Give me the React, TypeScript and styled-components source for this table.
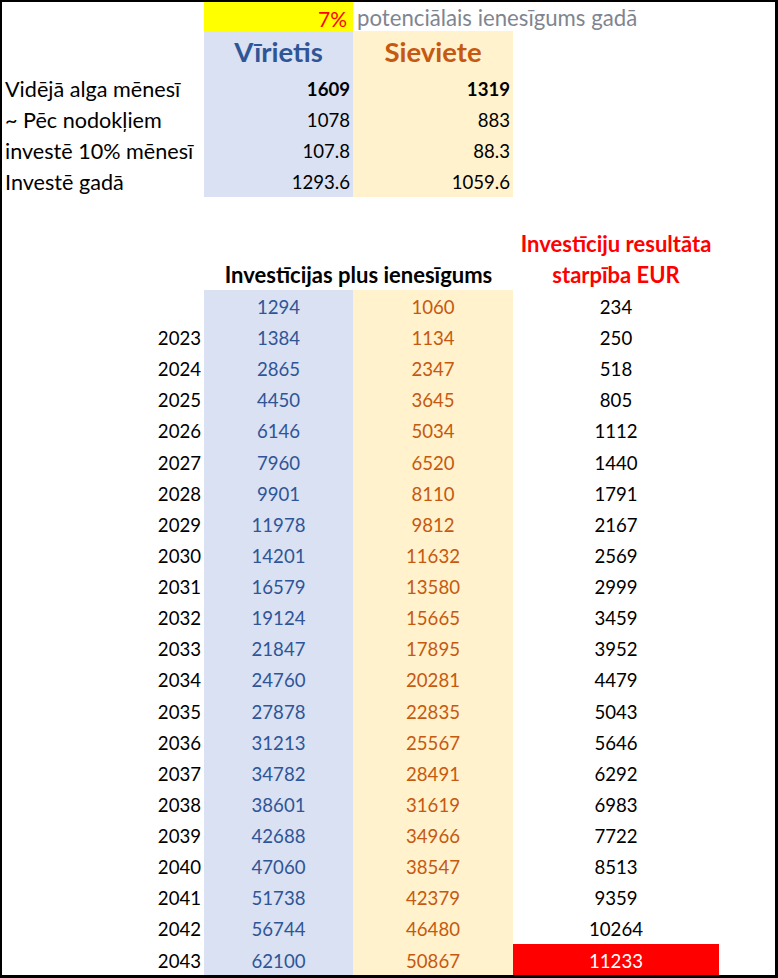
import React from "react";
import styled, { createGlobalStyle } from "styled-components";

const GlobalStyle = createGlobalStyle`
  html, body {
    margin: 0;
    padding: 0;
    background: #ffffff;
  }
  body {
    font-family: Lato, "Liberation Sans", sans-serif;
  }
`;

const BLUE_BG = "#d9e1f2";
const CREAM_BG = "#fff2cc";
const BLUE_TEXT = "#2f5597";
const ORANGE_TEXT = "#c65911";

// Whole sheet snippet with its black frame
const Sheet = styled.div`
  width: 778px;
  height: 978px;
  box-sizing: border-box;
  border-top: 2px solid #000;
  border-left: 2px solid #000;
  border-right: 3px solid #000;
  border-bottom: 3px solid #000;
  display: grid;
  grid-template-columns: 202px 149px 160px 206px 1fr;
  grid-template-rows: 29px 41px repeat(29, 31.138px);
  font-size: 18.6px;
  color: #000;
  overflow: hidden;
`;

type CellProps = {
  $bg?: string;
  $align?: "left" | "center" | "right";
  $color?: string;
  $bold?: boolean;
  $size?: number;
  $span?: number;
  $pad?: number;
};

const Cell = styled.div<CellProps>`
  display: flex;
  align-items: center;
  justify-content: ${(p) =>
    p.$align === "right" ? "flex-end" : p.$align === "center" ? "center" : "flex-start"};
  padding: 3px ${(p) => p.$pad ?? 3}px 0 ${(p) => p.$pad ?? 3}px;
  box-sizing: border-box;
  background: ${(p) => p.$bg ?? "transparent"};
  color: ${(p) => p.$color ?? "#000"};
  font-weight: ${(p) => (p.$bold ? 700 : 400)};
  font-size: ${(p) => (p.$size ? `${p.$size}px` : "inherit")};
  grid-column: ${(p) => (p.$span ? `span ${p.$span}` : "auto")};
  white-space: nowrap;
`;

// Row captions on the left use wider text than the figures
const Label = styled(Cell)`
  font-size: 21.6px;
`;

const Note = styled(Cell)`
  font-size: 22.2px;
  padding-top: 2px;
`;

const Heading = styled(Cell)`
  font-size: 22px;
  font-weight: 700;
  padding-top: 1px;
`;

const PersonHead = styled(Cell)`
  font-size: 27.5px;
  font-weight: 700;
  padding-top: 0;
`;

const Empty = styled.div`
  background: transparent;
`;

const summary = [
  { label: "Vidējā alga mēnesī", m: "1609", f: "1319", bold: true },
  { label: "~ Pēc nodokļiem", m: "1078", f: "883" },
  { label: "investē 10% mēnesī", m: "107.8", f: "88.3" },
  { label: "Investē gadā", m: "1293.6", f: "1059.6" },
];

const men = [
  1294, 1384, 2865, 4450, 6146, 7960, 9901, 11978, 14201, 16579, 19124, 21847,
  24760, 27878, 31213, 34782, 38601, 42688, 47060, 51738, 56744, 62100,
];
const women = [
  1060, 1134, 2347, 3645, 5034, 6520, 8110, 9812, 11632, 13580, 15665, 17895,
  20281, 22835, 25567, 28491, 31619, 34966, 38547, 42379, 46480, 50867,
];
const diff = [
  234, 250, 518, 805, 1112, 1440, 1791, 2167, 2569, 2999, 3459, 3952, 4479,
  5043, 5646, 6292, 6983, 7722, 8513, 9359, 10264, 11233,
];

const App: React.FC = () => {
  return (
    <>
      <GlobalStyle />
      <Sheet>
        {/* Row 1: return rate */}
        <Empty />
        <Cell $bg="#ffff00" $align="right" $color="#ff0000" $pad={6} $size={21}>
          7%
        </Cell>
        <Note $span={2} $color="#7f8590" $pad={4}>
          potenciālais ienesīgums gadā
        </Note>
        <Empty />

        {/* Row 2: headers */}
        <Empty />
        <PersonHead $bg={BLUE_BG} $align="center" $color={BLUE_TEXT}>
          Vīrietis
        </PersonHead>
        <PersonHead $bg={CREAM_BG} $align="center" $color={ORANGE_TEXT}>
          Sieviete
        </PersonHead>
        <Empty />
        <Empty />

        {/* Salary summary */}
        {summary.map((r) => (
          <React.Fragment key={r.label}>
            <Label>{r.label}</Label>
            <Cell $bg={BLUE_BG} $align="right" $bold={r.bold}>
              {r.m}
            </Cell>
            <Cell $bg={CREAM_BG} $align="right" $bold={r.bold}>
              {r.f}
            </Cell>
            <Empty />
            <Empty />
          </React.Fragment>
        ))}

        {/* Blank row */}
        <Empty />
        <Empty />
        <Empty />
        <Empty />
        <Empty />

        {/* Result headers */}
        <Empty />
        <Empty />
        <Empty />
        <Heading $align="center" $color="#ff0000">
          Investīciju resultāta
        </Heading>
        <Empty />

        <Empty />
        <Heading $span={2} $align="center">
          Investīcijas plus ienesīgums
        </Heading>
        <Heading $align="center" $color="#ff0000">
          starpība EUR
        </Heading>
        <Empty />

        {/* Yearly table */}
        {men.map((m, i) => {
          const last = i === men.length - 1;
          return (
            <React.Fragment key={i}>
              <Cell $align="right">{i === 0 ? "" : 2022 + i}</Cell>
              <Cell $bg={BLUE_BG} $align="center" $color={BLUE_TEXT}>
                {m}
              </Cell>
              <Cell $bg={CREAM_BG} $align="center" $color={ORANGE_TEXT}>
                {women[i]}
              </Cell>
              <Cell
                $align="center"
                $bg={last ? "#ff0000" : undefined}
                $color={last ? "#ffffff" : "#000"}
              >
                {diff[i]}
              </Cell>
              <Empty />
            </React.Fragment>
          );
        })}
      </Sheet>
    </>
  );
};

export default App;
